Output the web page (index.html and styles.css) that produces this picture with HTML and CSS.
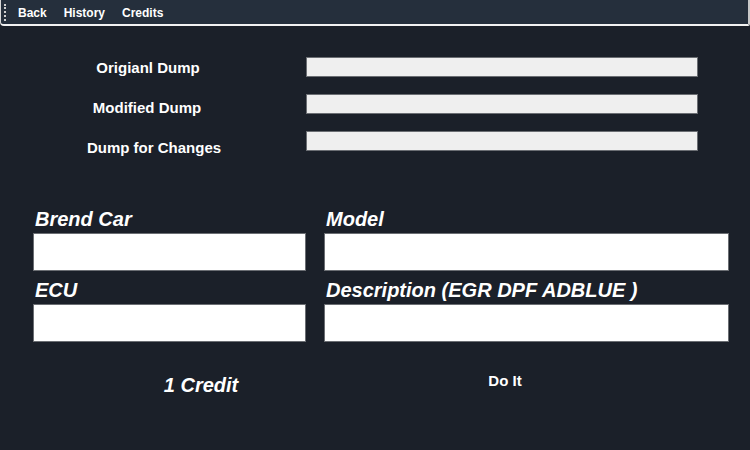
FILE: index.html
```html
<!DOCTYPE html>
<html>
<head>
<meta charset="utf-8">
<link rel="stylesheet" href="styles.css">
</head>
<body>
<div class="menubar">
  <span class="grip"></span>
  <span class="menu-item">Back</span>
  <span class="menu-item">History</span>
  <span class="menu-item">Credits</span>
</div>
<div class="dumps">
  <div class="dump-labels">
    <div class="dump-label label-original">Origianl Dump</div>
    <div class="dump-label label-modified">Modified Dump</div>
    <div class="dump-label label-changes">Dump for Changes</div>
  </div>
  <div class="dump-inputs">
    <div class="dump-input"></div>
    <div class="dump-input"></div>
    <div class="dump-input"></div>
  </div>
</div>
<div class="details">
  <div class="field">
    <div class="field-label">Brend Car</div>
    <div class="field-input"></div>
  </div>
  <div class="field">
    <div class="field-label">Model</div>
    <div class="field-input"></div>
  </div>
  <div class="field">
    <div class="field-label">ECU</div>
    <div class="field-input"></div>
  </div>
  <div class="field">
    <div class="field-label">Description (EGR DPF ADBLUE )</div>
    <div class="field-input"></div>
  </div>
</div>
<div class="footer">
  <div class="credit">1 Credit</div>
  <div class="doit">Do It</div>
</div>
</body>
</html>
```
FILE: styles.css
```css
html, body {
  margin: 0;
  padding: 0;
  background: #1b2029;
  color: #ffffff;
  font-family: "Liberation Sans", Arial, sans-serif;
  width: 750px;
  height: 450px;
  overflow: hidden;
}
.menubar {
  background: #252f3c;
  border-bottom: 2px solid #f2f2f2;
  border-left: 1px solid #d8d8d8;
  border-right: 2px solid #c8c8c8;
  border-bottom-left-radius: 4px;
  border-bottom-right-radius: 2px;
  display: flex;
  align-items: center;
  box-sizing: content-box;
  width: 747px;
  padding-top: 2px;
  height: 22px;
}
.grip {
  width: 0;
  height: 17px;
  border-left: 2px dotted #d0d0d0;
  margin-left: 3px;
  margin-right: 12px;
  margin-top: -2px;
}
.menu-item {
  font-size: 12px;
  font-weight: bold;
  margin-right: 17px;
}
.dumps {
  display: flex;
  padding-top: 31px;
}
.dump-labels {
  width: 306px;
  display: flex;
  flex-direction: column;
  gap: 20px;
  padding-top: 1px;
}
.dump-label {
  width: 300px;
  height: 20px;
  line-height: 20px;
  font-size: 15px;
  font-weight: bold;
  text-align: center;
}
.label-original {
  padding-right: 4px;
  box-sizing: border-box;
}
.label-modified {
  padding-right: 6px;
  box-sizing: border-box;
}
.label-changes {
  padding-left: 8px;
  box-sizing: border-box;
}
.dump-inputs {
  width: 392px;
  display: flex;
  flex-direction: column;
  gap: 17px;
}
.dump-input {
  height: 20px;
  box-sizing: border-box;
  background: #efefef;
  border: 1px solid #6b6e73;
}
.details {
  display: grid;
  grid-template-columns: 273px 405px;
  column-gap: 18px;
  padding: 49px 0 0 33px;
  row-gap: 7px;
}
.field-label {
  font-size: 20px;
  font-style: italic;
  font-weight: bold;
  height: 26px;
  line-height: 25px;
  padding-left: 2px;
}
.field-input {
  height: 38px;
  box-sizing: border-box;
  background: #ffffff;
  border: 1px solid #6b6e73;
}
.footer {
  display: flex;
  padding-top: 32px;
}
.credit {
  width: 402px;
  text-align: center;
  font-size: 20px;
  font-style: italic;
  font-weight: bold;
}
.doit {
  width: 206px;
  text-align: center;
  font-size: 15px;
  font-weight: bold;
  margin-top: -2px;
}
```
